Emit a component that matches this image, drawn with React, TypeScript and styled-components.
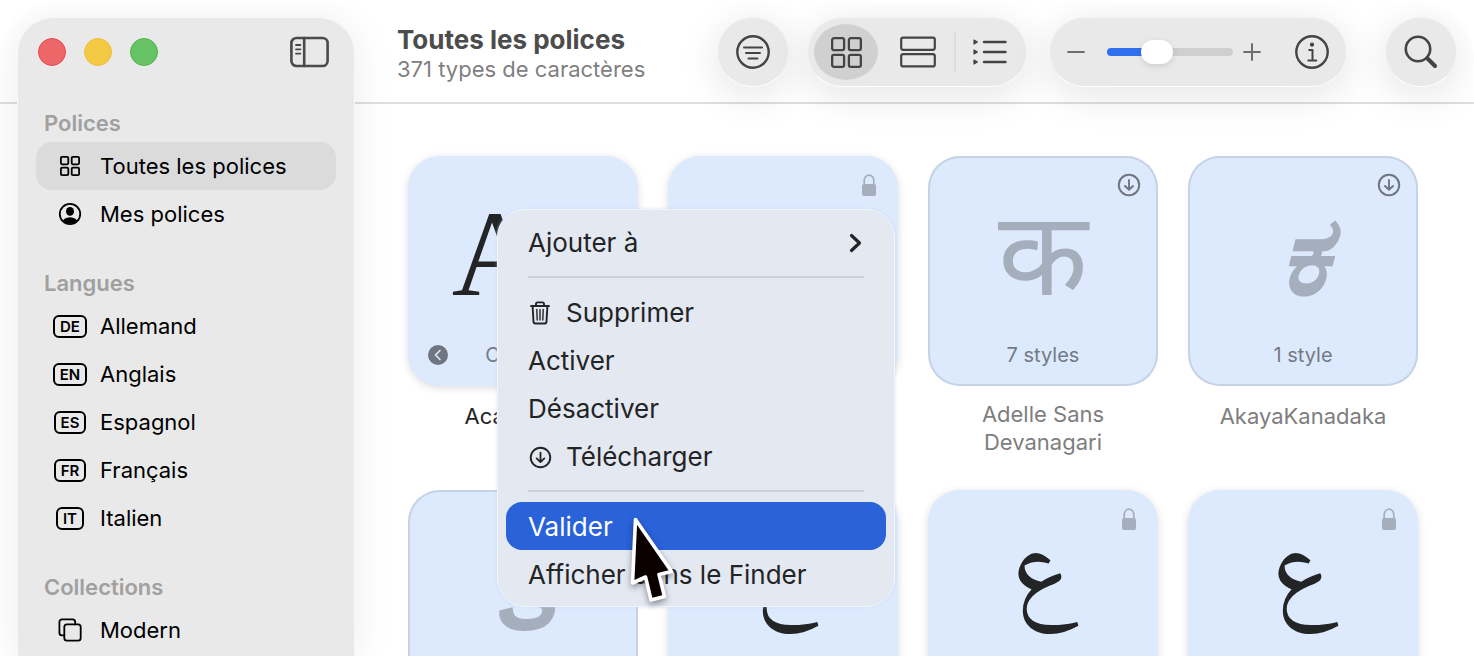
import React from "react";
import styled, { createGlobalStyle, css } from "styled-components";

const Global = createGlobalStyle`
  * { box-sizing: border-box; }
  body {
    margin: 0;
    background: #fff;
    font-family: Inter, "Liberation Sans", sans-serif;
    color: #222426;
    overflow: hidden;
  }
  button { font: inherit; color: inherit; background: none; border: 0; padding: 0; margin: 0; }
  h1, h2, p, ul, figure { margin: 0; padding: 0; }
  ul { list-style: none; }
`;

const Window = styled.div`
  position: relative;
  display: flex;
  height: calc(100vh - 2px);
  margin-top: 2px;
  overflow: hidden;
  border-radius: 56px 56px 0 0;
  background: linear-gradient(#dedede, #dedede) 0 100px / 100% 2px no-repeat #fff;
`;

const Sidebar = styled.nav`
  flex: 0 0 338px;
  margin: 15px 0 0 17px;
  padding: 0 18px;
  border: 1px solid #f8f8f8;
  border-bottom: 0;
  border-radius: 36px 36px 0 0;
  background: #e9e9e9;
  box-shadow: 0 4px 40px rgba(0, 0, 0, 0.08);
  position: relative;
  z-index: 2;
`;

const SidebarTop = styled.div`
  display: flex;
  align-items: center;
  gap: 18px;
  height: 68px;
  margin-bottom: 18px;
`;

const Light = styled.button<{ $fill: string; $edge: string }>`
  width: 28px;
  height: 28px;
  border-radius: 50%;
  background: ${(p) => p.$fill};
  border: 1px solid ${(p) => p.$edge};
  &:first-child { margin-left: 2px; }
`;

const PanelToggle = styled.button`
  display: flex;
  margin: 0 6px 0 auto;
  color: #4a4a4a;
`;

const Section = styled.section`
  margin-bottom: 26px;
`;

const SectionTitle = styled.h2`
  padding-left: 8px;
  font-size: 22px;
  line-height: 38px;
  font-weight: 600;
  color: #a0a0a0;
`;

const SideItem = styled.button<{ $selected?: boolean }>`
  display: flex;
  align-items: center;
  gap: 10px;
  width: 100%;
  height: 48px;
  padding-left: 14px;
  border-radius: 16px;
  font-size: 22px;
  line-height: 28px;
  color: #000;
  text-align: left;
  background: ${(p) => (p.$selected ? "#dbdbdb" : "transparent")};
`;

const IconSlot = styled.span`
  display: flex;
  justify-content: center;
  flex: 0 0 40px;
`;

const LangBadge = styled.span`
  padding: 0 5px;
  border: 2px solid #000;
  border-radius: 6px;
  font-size: 15px;
  line-height: 19px;
  font-weight: 600;
`;

const Main = styled.main`
  flex: 1;
  min-width: 0;
`;

const Header = styled.header`
  position: relative;
  z-index: 1;
  display: flex;
  align-items: center;
  height: 100px;
  padding: 0 17px 0 42px;
`;

const Titles = styled.div`
  margin-top: 3px;
  margin-right: auto;
  white-space: nowrap;
`;

const Title = styled.h1`
  font-size: 26px;
  line-height: 30px;
  font-weight: 700;
  color: #4c4c4c;
`;

const Subtitle = styled.p`
  font-size: 22px;
  line-height: 28px;
  color: #808080;
`;

const glass = css`
  display: flex;
  align-items: center;
  height: 70px;
  border: 1px solid #f4f4f4;
  border-bottom-color: #fff;
  border-radius: 36px;
  background: #e9e9e9;
  box-shadow: 0 8px 40px rgba(0, 0, 0, 0.11);
  color: #444;
`;

const RoundButton = styled.button`
  ${glass}
  justify-content: center;
  width: 72px;
`;

const Pill = styled.div`
  ${glass}
`;

const Tools = styled.div`
  display: flex;
  align-items: center;
  gap: 18px;

  ${RoundButton}:last-child { margin-left: 20px; }
`;

const ViewPill = styled(Pill)`
  padding: 0 2px 0 6px;
`;

const ZoomPill = styled(Pill)`
  gap: 14px;
  margin-left: 4px;
  padding: 0 16px 0 17px;
  color: #6e6e6e;
`;

const ViewButton = styled.button<{ $selected?: boolean }>`
  display: flex;
  align-items: center;
  justify-content: center;
  width: ${(p) => (p.$selected ? "64px" : "68px")};
  height: 56px;
  border-radius: 32px / 28px;
  background: ${(p) => (p.$selected ? "#d0d0d0" : "transparent")};

  &:nth-child(2) { margin: 0 2px 0 6px; }
`;

const PillDivider = styled.span`
  width: 2px;
  height: 40px;
  background: #dcdcdc;
`;

const ZoomStep = styled.button`
  display: flex;
`;

const InfoButton = styled.button`
  display: flex;
  margin-left: 19px;
  color: #444;
`;

const Slider = styled.input`
  appearance: none;
  width: 126px;
  height: 24px;
  margin: 0 -4px 0 8px;
  background: none;

  &::-webkit-slider-runnable-track {
    height: 8px;
    border-radius: 4px;
    background: linear-gradient(to right, #2f70ee 40%, #cfcfcf 40%);
  }
  &::-webkit-slider-thumb {
    appearance: none;
    width: 32px;
    height: 24px;
    margin-top: -8px;
    border-radius: 12px;
    background: #fff;
    box-shadow: 0 2px 6px rgba(0, 0, 0, 0.12);
  }
`;

const Gallery = styled.ul`
  display: grid;
  grid-template-columns: repeat(auto-fill, 230px);
  column-gap: 30px;
  row-gap: 34px;
  padding: 54px 26px 0 53px;
`;

const Card = styled.div<{ $outlined?: boolean }>`
  position: relative;
  display: flex;
  flex-direction: column;
  align-items: center;
  height: 230px;
  border-radius: 32px;
  background: #dde9fd;
  ${(p) =>
    p.$outlined
      ? css`box-shadow: inset 0 0 0 2px #c6d3e6;`
      : css`box-shadow: 0 2px 8px rgba(0, 0, 0, 0.14);`}
`;

type Face = "latin" | "arabic" | "devanagari" | "kannada";

const faces = {
  latin: css`
    font: 400 122px/196px "Liberation Serif", serif;
  `,
  arabic: css`
    font: 400 108px/180px "Noto Naskh Arabic", "Noto Sans Arabic", "DejaVu Sans", sans-serif;
  `,
  devanagari: css`
    font: 400 117px/222px "Noto Sans Devanagari", "Noto Sans", sans-serif;
  `,
  kannada: css`
    font: italic 700 110px/222px "Noto Sans Devanagari", "Noto Sans", sans-serif;
  `,
};

const Glyph = styled.span<{ $faded?: boolean; $face: Face }>`
  height: 184px;
  ${(p) => faces[p.$face]}
  color: ${(p) => (p.$faded ? "#a5aebc" : "#222426")};
`;

const Styles = styled.span`
  font-size: 20px;
  line-height: 30px;
  color: #737a85;
`;

const Corner = styled.span`
  position: absolute;
  top: 17px;
  right: 17px;
  display: flex;
  color: #6f7680;
`;

const Prev = styled.button`
  position: absolute;
  left: 20px;
  bottom: 21px;
  display: flex;
`;

const Name = styled.p<{ $faded?: boolean; $twoLines: boolean }>`
  height: 56px;
  margin: 14px auto 0;
  max-width: 180px;
  font-size: 22px;
  line-height: ${(p) => (p.$twoLines ? "28px" : "32px")};
  text-align: center;
  color: ${(p) => (p.$faded ? "#7e7e7e" : "#222426")};
`;

const Menu = styled.div`
  position: absolute;
  left: 497px;
  top: 207px;
  z-index: 3;
  width: 398px;
  padding: 8px;
  border: 1px solid #f0f6fd;
  border-radius: 28px;
  background: #e4e8f1;
  box-shadow: 0 0 3px rgba(190, 215, 245, 0.7);
`;

const MenuItem = styled.button<{ $active?: boolean }>`
  display: flex;
  align-items: center;
  gap: 14px;
  width: 100%;
  height: 48px;
  padding: 2px 22px 0;
  border-radius: 16px;
  font-size: 26px;
  line-height: 32px;
  text-align: left;
  white-space: nowrap;
  color: ${(p) => (p.$active ? "#fff" : "#222426")};
  background: ${(p) => (p.$active ? "#2962d9" : "transparent")};
`;

const MenuIcon = styled.span`
  display: flex;
  justify-content: center;
  width: 24px;
`;

const Push = styled.span`
  display: flex;
  margin-left: auto;
`;

const MenuRule = styled.hr`
  height: 2px;
  margin: 10px 22px;
  border: 0;
  background: #ccd0d9;
`;

const Pointer = styled.svg`
  position: absolute;
  left: 620px;
  top: 506px;
  z-index: 4;
  filter: drop-shadow(0 3px 3px rgba(0, 0, 0, 0.4));
`;

const stroke = (w: number) => ({
  fill: "none",
  stroke: "currentColor",
  strokeWidth: w,
  strokeLinecap: "round" as const,
  strokeLinejoin: "round" as const,
});

const PanelIcon = () => (
  <svg width="40" height="32" viewBox="0 0 40 32" {...stroke(2.6)}>
    <rect x="1.4" y="2" width="36.200" height="28" rx="5" />
    <path d="M14.200 2v28" />
    <path d="M6 9h4.400M6 13.300h4.400M6 17.600h4.400" strokeWidth="1.800" />
  </svg>
);

const GridIcon = ({ size, w }: { size: number; w: number }) => (
  <svg width={size} height={size} viewBox={`0 0 ${size} ${size}`} {...stroke(w)}>
    {[0, 1].map((r) =>
      [0, 1].map((c) => {
        const s = (size - w * 2 - size * 0.08) / 2;
        const step = size - w - s;
        return <rect key={`${r}${c}`} x={w / 2 + c * step} y={w / 2 + r * step} width={s} height={s} rx={size * 0.06} />;
      })
    )}
  </svg>
);

const PersonIcon = () => (
  <svg width="24" height="24" viewBox="0 0 24 24">
    <defs>
      <clipPath id="person"><circle cx="12" cy="12" r="9.800" /></clipPath>
    </defs>
    <circle cx="12" cy="12" r="10.200" fill="none" stroke="#000" strokeWidth="1.800" />
    <ellipse cx="12" cy="9.400" rx="4" ry="4.400" />
    <ellipse cx="12" cy="20.500" rx="7.600" ry="5.200" clipPath="url(#person)" />
  </svg>
);

const CopyIcon = () => (
  <svg width="24" height="24" viewBox="0 0 24 24" {...stroke(1.8)}>
    <rect x="6.300" y="6.300" width="16.400" height="16.400" rx="2.600" />
    <path d="M6.300 17.300H4A2.600 2.600 0 0 1 1.400 14.700V4A2.600 2.600 0 0 1 4 1.400h10.600A2.600 2.600 0 0 1 17.200 4v2.300" />
  </svg>
);

const FilterIcon = () => (
  <svg width="36" height="36" viewBox="0 0 36 36" {...stroke(2.4)}>
    <circle cx="18" cy="18" r="15.700" />
    <path d="M9 13.500h18M11 19h14M13.500 24.500h9" strokeWidth="2" />
  </svg>
);

const RowsIcon = () => (
  <svg width="36" height="32" viewBox="0 0 36 32" {...stroke(2.2)}>
    <rect x="1.200" y="1.600" width="33.600" height="12.200" rx="2" />
    <rect x="1.200" y="18.200" width="33.600" height="12.200" rx="2" />
  </svg>
);

const ListIcon = () => (
  <svg width="34" height="26" viewBox="0 0 34 26" {...stroke(2.4)}>
    <path d="M11 3h21.500M11 13h21.500M11 23h21.500" />
    {[3, 13, 23].map((y) => (
      <path key={y} d={`M1 ${y - 2}L4.400 ${y}L1 ${y + 2}z`} fill="currentColor" strokeWidth="1.200" />
    ))}
  </svg>
);

const InfoIcon = () => (
  <svg width="36" height="36" viewBox="0 0 36 36" {...stroke(2.4)}>
    <circle cx="18" cy="18" r="15.700" />
    <circle cx="18" cy="10.700" r="2.100" fill="currentColor" stroke="none" />
    <path d="M15.200 16h3.300v10.400M14.300 26.600h8" strokeWidth="2" />
  </svg>
);

const SearchIcon = () => (
  <svg width="36" height="36" viewBox="0 0 36 36" {...stroke(2.6)}>
    <circle cx="15" cy="15" r="12.200" />
    <path d="M24.500 24.500l7.500 7.500" strokeWidth="4" />
  </svg>
);

const DownIcon = ({ size }: { size: number }) => (
  <svg width={size} height={size} viewBox="0 0 24 24" {...stroke(2)}>
    <circle cx="12" cy="12" r="10.200" />
    <path d="M12 7v9.600M8 13l4 3.800L16 13" strokeWidth="1.900" />
  </svg>
);

const LockIcon = () => (
  <svg width="24" height="24" viewBox="-1 -1 24 24">
    <path d="M6.200 11V6.500a4.800 5.300 0 0 1 9.600 0V11" fill="none" stroke="#a5aebc" strokeWidth="1.700" />
    <rect x="4" y="10" width="14" height="12" rx="2" fill="#a5aebc" />
  </svg>
);

const TrashIcon = () => (
  <svg width="24" height="26" viewBox="0 0 24 26" {...stroke(1.9)}>
    <path d="M3 6h18M8 6V4a1.600 1.600 0 0 1 1.600-1.600h4.800A1.600 1.600 0 0 1 16 4v2M4.600 6l.9 15.600A2 2 0 0 0 7.500 23.500h9a2 2 0 0 0 2-1.900L19.400 6" />
    <path d="M8.800 9.500l.4 10.500M12 9.500V20M15.200 9.500l-.4 10.500" strokeWidth="1.400" />
  </svg>
);

const languages = [
  ["DE", "Allemand"],
  ["EN", "Anglais"],
  ["ES", "Espagnol"],
  ["FR", "Français"],
  ["IT", "Italien"],
];

type Font = {
  name: string;
  glyph: string;
  face: Face;
  styles: string;
  state?: "locked" | "remote";
  prev?: boolean;
};

const fonts: Font[] = [
  { name: "Academico", glyph: "Aa", face: "latin", styles: "Courant", prev: true },
  { name: "Adelle", glyph: "Aa", face: "latin", styles: "2 styles", state: "locked" },
  { name: "Adelle Sans Devanagari", glyph: "क", face: "devanagari", styles: "7 styles", state: "remote" },
  { name: "AkayaKanadaka", glyph: "ಕ", face: "kannada", styles: "1 style", state: "remote" },
  { name: "AkayaTelivigala", glyph: "క", face: "kannada", styles: "1 style", state: "remote" },
  { name: "Al Bayan", glyph: "ع", face: "arabic", styles: "2 styles", state: "locked" },
  { name: "Al Nile", glyph: "ع", face: "arabic", styles: "2 styles", state: "locked" },
  { name: "Al Tarikh", glyph: "ع", face: "arabic", styles: "1 style", state: "locked" },
];

const FontCard = ({ font }: { font: Font }) => {
  const remote = font.state === "remote";
  return (
    <li>
      <Card $outlined={remote}>
        {font.state && <Corner>{remote ? <DownIcon size={24} /> : <LockIcon />}</Corner>}
        <Glyph $faded={remote} $face={font.face}>{font.glyph}</Glyph>
        <Styles>{font.styles}</Styles>
        {font.prev && (
          <Prev aria-label="Style précédent">
            <svg width="20" height="20" viewBox="0 0 20 20">
              <circle cx="10" cy="10" r="10" fill="#6f7681" />
              <path d="M12 5.500L7.500 10l4.500 4.500" fill="none" stroke="#dde9fd" strokeWidth="1.700" strokeLinecap="round" strokeLinejoin="round" />
            </svg>
          </Prev>
        )}
      </Card>
      <Name $faded={remote} $twoLines={font.name.length > 16}>{font.name}</Name>
    </li>
  );
};

export default function App() {
  return (
    <>
      <Global />
      <Window>
        <Sidebar aria-label="Barre latérale">
          <SidebarTop>
            <Light $fill="#ee6768" $edge="#e9484a" aria-label="Fermer" />
            <Light $fill="#f4ca45" $edge="#ecbf3c" aria-label="Réduire" />
            <Light $fill="#66c466" $edge="#4eb548" aria-label="Agrandir" />
            <PanelToggle aria-label="Masquer la barre latérale"><PanelIcon /></PanelToggle>
          </SidebarTop>
          <Section>
            <SectionTitle>Polices</SectionTitle>
            <SideItem $selected><IconSlot><GridIcon size={20} w={1.8} /></IconSlot>Toutes les polices</SideItem>
            <SideItem><IconSlot><PersonIcon /></IconSlot>Mes polices</SideItem>
          </Section>
          <Section>
            <SectionTitle>Langues</SectionTitle>
            {languages.map(([code, label]) => (
              <SideItem key={code}><IconSlot><LangBadge>{code}</LangBadge></IconSlot>{label}</SideItem>
            ))}
          </Section>
          <Section>
            <SectionTitle>Collections</SectionTitle>
            <SideItem><IconSlot><CopyIcon /></IconSlot>Modern</SideItem>
          </Section>
        </Sidebar>

        <Main>
          <Header>
            <Titles>
              <Title>Toutes les polices</Title>
              <Subtitle>371 types de caractères</Subtitle>
            </Titles>
            <Tools>
              <RoundButton aria-label="Filtrer"><FilterIcon /></RoundButton>
              <ViewPill>
                <ViewButton $selected aria-label="Grille"><GridIcon size={31} w={2.3} /></ViewButton>
                <ViewButton aria-label="Échantillons"><RowsIcon /></ViewButton>
                <PillDivider />
                <ViewButton aria-label="Liste"><ListIcon /></ViewButton>
              </ViewPill>
              <ZoomPill>
                <ZoomStep aria-label="Réduire la taille">
                  <svg width="18" height="18" viewBox="0 0 18 18" {...stroke(2)}><path d="M1 9h16" /></svg>
                </ZoomStep>
                <Slider type="range" aria-label="Taille" min={0} max={100} defaultValue={36} />
                <ZoomStep aria-label="Augmenter la taille">
                  <svg width="18" height="18" viewBox="0 0 18 18" {...stroke(2)}><path d="M1 9h16M9 1v16" /></svg>
                </ZoomStep>
                <InfoButton aria-label="Informations"><InfoIcon /></InfoButton>
              </ZoomPill>
              <RoundButton aria-label="Rechercher"><SearchIcon /></RoundButton>
            </Tools>
          </Header>
          <Gallery>
            {fonts.map((f) => <FontCard key={f.name} font={f} />)}
          </Gallery>
        </Main>

        <Menu role="menu">
          <MenuItem role="menuitem">
            Ajouter à
            <Push><svg width="16" height="22" viewBox="0 0 16 22" {...stroke(3.2)}><path d="M3.500 3.500L11.500 11l-8 7.500" /></svg></Push>
          </MenuItem>
          <MenuRule />
          <MenuItem role="menuitem"><MenuIcon><TrashIcon /></MenuIcon>Supprimer</MenuItem>
          <MenuItem role="menuitem">Activer</MenuItem>
          <MenuItem role="menuitem">Désactiver</MenuItem>
          <MenuItem role="menuitem"><MenuIcon><DownIcon size={23} /></MenuIcon>Télécharger</MenuItem>
          <MenuRule />
          <MenuItem role="menuitem" $active>Valider</MenuItem>
          <MenuItem role="menuitem">Afficher dans le Finder</MenuItem>
        </Menu>

        <Pointer width="64" height="104" viewBox="620 508 64 104" aria-hidden="true">
          <path d="M635.500 519.500L671.500 571.500L659 574.500L664.500 596.500L651 600L645.500 577L632.500 583z" fill="#0b0000" stroke="#fff" strokeWidth="3.600" strokeLinejoin="round" />
        </Pointer>
      </Window>
    </>
  );
}
